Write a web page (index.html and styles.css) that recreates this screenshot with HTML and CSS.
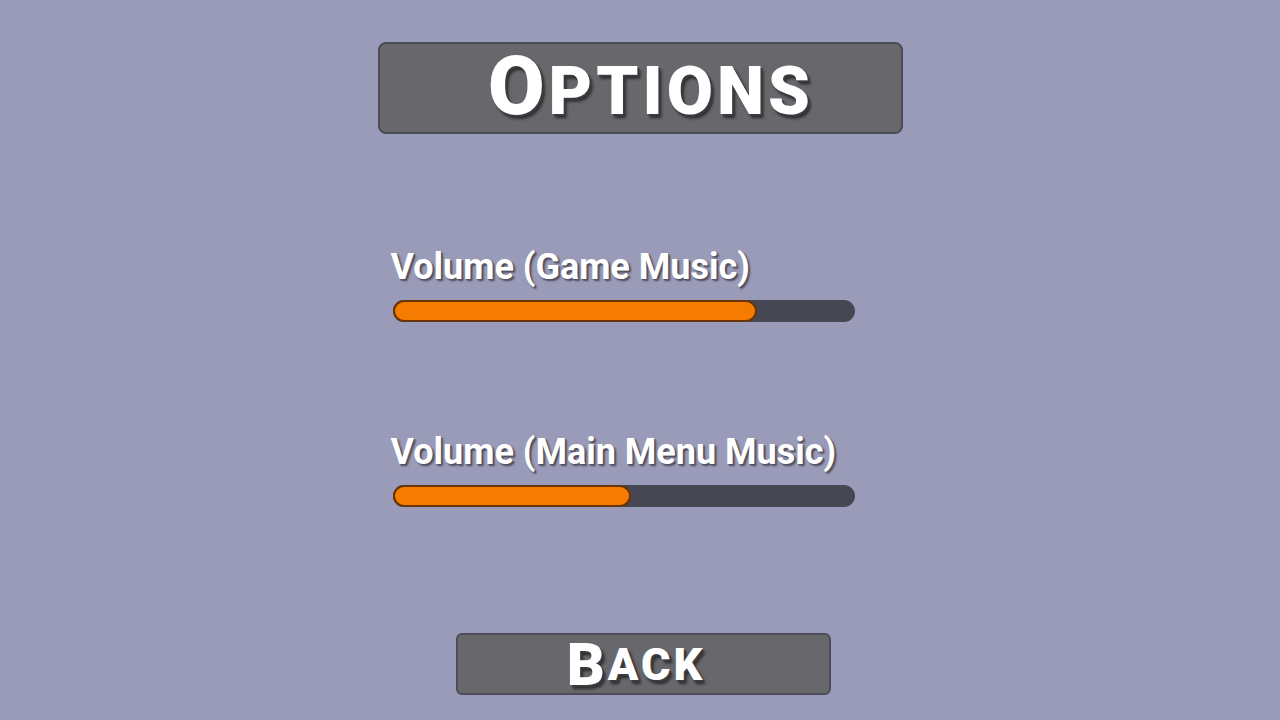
FILE: index.html
```html
<!DOCTYPE html>
<html lang="en">
<head>
    <meta charset="UTF-8">
    <meta name="viewport" content="width=device-width, initial-scale=1.0">
    <title>Options</title>
    <link rel="stylesheet" href="styles.css">
</head>
<body>

    <div class="menu">
        <div class="title-box">
            <h1 class="title"><span class="big">O</span>PTIONS</h1>
        </div>

        <div class="settings">
            <div class="setting">
                <div class="label">Volume (Game Music)</div>
                <div class="slider"><div class="fill" style="width: 79%"></div></div>
            </div>
            <div class="setting">
                <div class="label">Volume (Main Menu Music)</div>
                <div class="slider"><div class="fill" style="width: 51.7%"></div></div>
            </div>
        </div>

        <div class="back-button"><span class="big">B</span>ACK</div>
    </div>

</body>
</html>
```

FILE: styles.css
```css
body {
    font-family: Roboto, "Liberation Sans", sans-serif;
    background-color: #9a9bb8;
    margin: 0;
    height: 720px;
    overflow: hidden;
}
.menu {
    width: 525px;
    margin: 42px auto 0;
    display: flex;
    flex-direction: column;
}
.title-box {
    box-sizing: border-box;
    height: 92px;
    background-color: #68686c;
    border: 2px solid #4c4c58;
    border-radius: 8px;
    display: flex;
    align-items: center;
    justify-content: center;
    padding-left: 22px;
}
.title {
    margin: 0;
    color: #fff;
    font-size: 67px;
    font-weight: 900;
    line-height: 82px;
    letter-spacing: 4px;
    text-shadow: 2px 2px 0 #3a3a40, 3px 4px 3px rgba(0, 0, 0, 0.6);
}
.title .big {
    font-size: 82px;
}
.settings {
    padding-left: 13px;
    margin-top: 113px;
    display: flex;
    flex-direction: column;
    gap: 110px;
}
.label {
    color: #fff;
    font-size: 36px;
    font-weight: 700;
    line-height: 40px;
    text-shadow: 1px 1px 0 #55556a, 2px 2px 2px rgba(0, 0, 0, 0.55);
}
.slider {
    margin: 13px 0 0 2px;
    width: 462px;
    height: 22px;
    background-color: #474753;
    border-radius: 11px;
}
.fill {
    box-sizing: border-box;
    height: 22px;
    background-color: #f57c00;
    border: 2px solid #6a3506;
    border-radius: 11px;
}
.back-button {
    box-sizing: border-box;
    width: 375px;
    height: 62px;
    margin: 126px 0 0 78px;
    background-color: #68686c;
    border: 2px solid #4c4c58;
    border-radius: 6px;
    display: flex;
    align-items: center;
    justify-content: center;
    padding-right: 14px;
    color: #fff;
    font-size: 45px;
    font-weight: 900;
    line-height: 59px;
    letter-spacing: 3px;
    text-shadow: 2px 2px 0 #3a3a40, 3px 4px 3px rgba(0, 0, 0, 0.6);
}
.back-button .big {
    font-size: 59px;
}
```
